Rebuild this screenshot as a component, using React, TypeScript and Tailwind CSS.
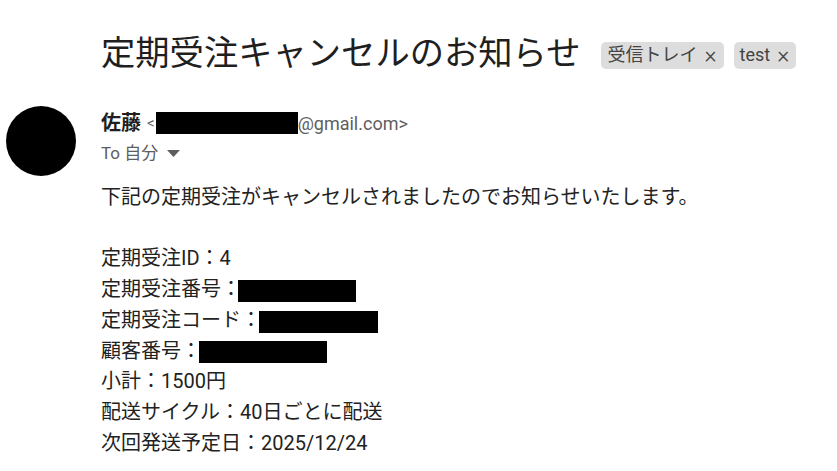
const FONT = "font-['Roboto','Noto_Sans_CJK_JP',sans-serif]";

function Redact({ w }: { w: number }) {
  return <span className="inline-block bg-black align-middle h-[22px]" style={{ width: w }} />;
}

function Chip({ label }: { label: string }) {
  return (
    <span className="inline-flex items-center h-[27px] rounded-[5px] bg-[#dddddd] pl-[6px] pr-[7px] text-[18px] text-[#444] leading-none">
      {label}
      <span className="ml-[7px] text-[23px] font-light leading-none">×</span>
    </span>
  );
}

export default function App() {
  return (
    <div className={`w-[837px] h-[471px] overflow-hidden bg-white text-[#222] ${FONT}`}>
      <div className="flex items-center pl-[101px] pt-[32px]">
        <h1 className="text-[34.3px] leading-[42px] font-normal text-[#1f1f1f]">定期受注キャンセルのお知らせ</h1>
        <div className="flex gap-[10px] ml-[21px] mt-[4px]">
          <Chip label="受信トレイ" />
          <Chip label="test" />
        </div>
      </div>

      <div className="flex gap-[25px] pl-[6px] mt-[32px]">
        <div className="w-[70px] h-[70px] rounded-full bg-black shrink-0" />
        <div className="flex flex-col">
          <div className="flex items-center h-[28px] mt-[3px]">
            <span className="text-[20px] font-bold text-[#1f1f1f]">佐藤</span>
            <span className="ml-[6px] text-[15px] text-[#5e5e5e]">&lt;</span>
            <span className="inline-block bg-black w-[142px] h-[22px] ml-[1px]" />
            <span className="text-[18px] text-[#5e5e5e]">@gmail.com&gt;</span>
          </div>
          <div className="flex items-center h-[26px] mt-[4px] text-[17px] text-[#5e5e5e]">
            <span>To 自分</span>
            <svg className="ml-[9px]" width="13" height="8" viewBox="0 0 13 8">
              <path d="M0 0h13L6.5 7z" fill="#5e5e5e" />
            </svg>
          </div>
          <div className="mt-[15px] text-[20px] leading-[30.7px]">
            <p>下記の定期受注がキャンセルされましたのでお知らせいたします。</p>
            <p>&nbsp;</p>
            <p>定期受注ID：4</p>
            <p>定期受注番号：<span className="-ml-[3px]"><Redact w={118} /></span></p>
            <p>定期受注コード：<span className="-ml-[2px]"><Redact w={119} /></span></p>
            <p>顧客番号：<span className="-ml-[2px]"><Redact w={128} /></span></p>
            <p>小計：1500円</p>
            <p>配送サイクル：40日ごとに配送</p>
            <p>次回発送予定日：2025/12/24</p>
          </div>
        </div>
      </div>
    </div>
  );
}
